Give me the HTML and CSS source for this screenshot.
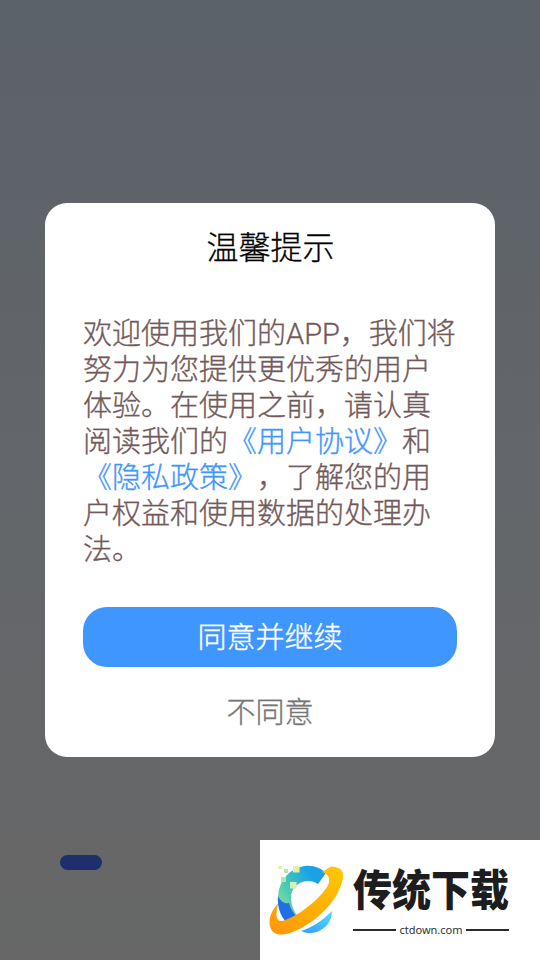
FILE: index.html
```html
<!DOCTYPE html>
<html lang="zh-CN">
<head>
<meta charset="utf-8">
<title>温馨提示</title>
<link rel="stylesheet" href="styles.css">
</head>
<body>
<main class="screen">
  <section class="dialog">
    <h1 class="title">温馨提示</h1>
    <p class="message">欢迎使用我们的APP，我们将努力为您提供更优秀的用户体验。在使用之前，请认真阅读我们的<a class="link">《用户协议》</a>和<a class="link">《隐私政策》</a>，了解您的用户权益和使用数据的处理办法。</p>
    <button class="agree">同意并继续</button>
    <button class="decline">不同意</button>
  </section>
  <div class="pill"></div>
  <aside class="brand">
    <svg class="brand-icon" viewBox="0 0 85 80" width="85" height="80">
      <defs>
        <linearGradient id="arc" x1="0" y1="0.85" x2="0.9" y2="0.15">
          <stop offset="0" stop-color="#96e48c"/>
          <stop offset="0.4" stop-color="#45c8bd"/>
          <stop offset="0.85" stop-color="#1aa2e6"/>
        </linearGradient>
        <linearGradient id="ring" x1="0" y1="1" x2="1" y2="0">
          <stop offset="0" stop-color="#ff9508"/>
          <stop offset="1" stop-color="#ffc904"/>
        </linearGradient>
        <linearGradient id="moon" x1="0" y1="1" x2="1" y2="0">
          <stop offset="0" stop-color="#2f9cfb"/>
          <stop offset="1" stop-color="#52dcff"/>
        </linearGradient>
      </defs>
      <path d="M13 37 C14 20 25 8 40 6 C48 5 56 8 61 13 L53 24 C47 20 38 20 32 25 C25 30 23 42 33 57 L24 61 C17 55 12 47 13 37 Z" fill="url(#arc)"/>
      <path d="M13 36 C16 42 20 44 24 43 C26 50 29 54 33 58 L22 63 C15 56 12 46 13 36 Z" fill="#1f6fe8"/>
      <path d="M13.3 43 C7 50 3 58 5 66 C7 75 15 76 25 73 C45 66 73 45 78 18 C79 10 75 7 66 6.5 L57 12 C63 14 67 19 62 27 C52 42 30 58 17 61 C11 62 10 55 13.3 43 Z" fill="url(#ring)"/>
      <path d="M36 71 C46 68 57 61 67 51 C67 60 62 68 52 72 C46 74 40 73 36 71 Z" fill="url(#moon)"/>
      <rect x="13.5" y="6" width="3" height="3" fill="#dcefa0"/>
      <rect x="19" y="9" width="4" height="4" fill="#bde8a0"/>
      <rect x="28" y="6" width="6.5" height="6.5" fill="#e2f0a2"/>
      <rect x="16" y="17" width="5" height="5" fill="#b4e89a"/>
      <rect x="25" y="22" width="6.5" height="6.5" fill="#d4f0ae"/>
    </svg>
    <div class="brand-text">
      <div class="brand-name">传统下载</div>
      <div class="brand-url"><span class="rule"></span><span class="domain">ctdown.com</span><span class="rule"></span></div>
    </div>
  </aside>
</main>
</body>
</html>
```
FILE: styles.css
```css
* { box-sizing: border-box; }
html, body { margin: 0; padding: 0; }
body {
  width: 540px;
  height: 960px;
  overflow: hidden;
  font-family: Roboto, "Noto Sans CJK SC", "Noto Sans", sans-serif;
  font-weight: 300;
  text-spacing-trim: space-all;
}
.screen {
  position: relative;
  width: 540px;
  height: 960px;
  display: flex;
  align-items: center;
  justify-content: center;
  background: linear-gradient(180deg, #5c6269 0%, #63666a 50%, #676767 100%);
}
.dialog {
  width: 450px;
  height: 554px;
  background: #fff;
  border-radius: 22px;
  padding: 23px 37px 0 38px;
  display: flex;
  flex-direction: column;
}
.title {
  margin: 0;
  font-size: 32px;
  font-weight: 300;
  line-height: 45px;
  text-align: center;
  color: #000;
  -webkit-text-stroke: 0.3px #000;
}
.message {
  margin: 45px 0 0;
  font-size: 29px;
  font-weight: 300;
  line-height: 36px;
  color: #735a5a;
  -webkit-text-stroke: 0.35px currentColor;
}
.link { color: #3f97ff; }
.agree {
  margin-top: 39px;
  height: 60px;
  width: 374px;
  flex: none;
  border: 0;
  border-radius: 24px;
  background: #4096ff;
  color: #fff;
  font: inherit;
  font-size: 29px;
  padding: 0 0 4px;
  -webkit-text-stroke: 0.35px #fff;
}
.decline {
  margin-top: 24px;
  border: 0;
  background: none;
  color: #777;
  font: inherit;
  font-size: 29px;
  line-height: 44px;
  padding: 0;
  width: 374px;
  -webkit-text-stroke: 0.35px #777;
}
.pill {
  position: absolute;
  left: 60px;
  top: 855px;
  width: 42px;
  height: 15px;
  border-radius: 8px;
  background: #1f2f6e;
}
.brand {
  position: absolute;
  right: 0;
  bottom: 0;
  width: 280px;
  height: 120px;
  background: #fff;
  display: flex;
  align-items: flex-start;
  padding: 20px 0 0 5px;
}
.brand-icon { flex: none; }
.brand-text {
  margin-left: 3px;
  margin-top: 2px;
  width: 156px;
  display: flex;
  flex-direction: column;
}
.brand-name {
  font-size: 39px;
  font-weight: 900;
  line-height: 50px;
  color: #1d1d1d;
  white-space: nowrap;
  transform: scaleY(1.1);
  font-family: "Noto Sans CJK SC", sans-serif;
}
.brand-url {
  display: flex;
  align-items: center;
  gap: 3px;
  margin-top: 11px;
}
.rule { flex: 1; height: 2px; background: #2b2b2b; }
.domain {
  font-family: "Noto Sans", sans-serif;
  font-weight: 400;
  font-size: 11px;
  line-height: 14px;
  color: #333;
}
```
